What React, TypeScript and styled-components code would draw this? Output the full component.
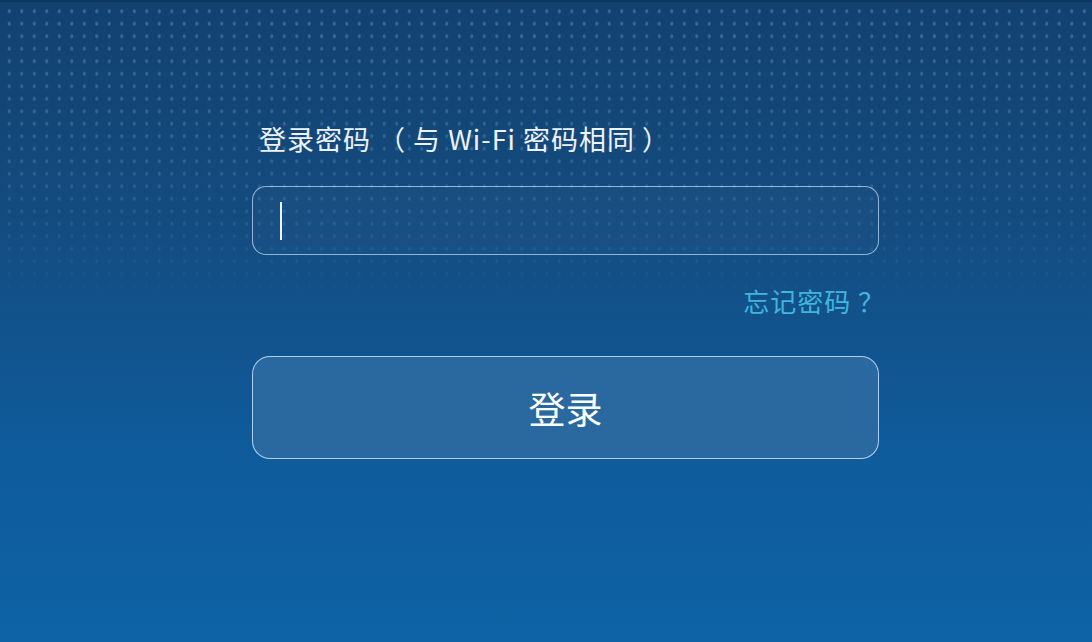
import styled, { createGlobalStyle } from "styled-components";

const GlobalStyle = createGlobalStyle`
  html, body {
    margin: 0;
    padding: 0;
    height: 100%;
  }
  body {
    font-family: "Noto Sans CJK SC", "Noto Sans", sans-serif;
    background: #1e5a92;
  }
`;

const Screen = styled.div`
  position: relative;
  width: 100%;
  height: 642px;
  overflow: hidden;
  background: linear-gradient(180deg, #12416f 0%, #144c80 35%, #0f5b9b 70%, #0d63a6 100%);
  border-top: 2px solid #0e3661;
  box-sizing: border-box;

  &::before {
    content: "";
    position: absolute;
    inset: 0;
    background-image: radial-gradient(ellipse 1.8px 2.4px, rgba(120, 170, 220, 0.38) 70%, transparent 100%);
    background-size: 12.5px 12.5px;
    background-position: 3px 3px;
    -webkit-mask-image: linear-gradient(180deg, #000 0%, rgba(0, 0, 0, 0.7) 25%, transparent 48%);
    mask-image: linear-gradient(180deg, #000 0%, rgba(0, 0, 0, 0.7) 25%, transparent 48%);
    pointer-events: none;
  }
`;

const Form = styled.div`
  position: relative;
  display: flex;
  flex-direction: column;
  width: 627px;
  margin-left: 252px;
  padding-top: 119px;
`;

const Label = styled.div`
  font-size: 27px;
  line-height: 36px;
  letter-spacing: 1px;
  color: #eef3f9;
  padding-left: 7px;
  margin-bottom: 29px;
  white-space: pre;
`;

const Field = styled.div`
  height: 69px;
  box-sizing: border-box;
  border: 1.5px solid rgba(180, 210, 240, 0.78);
  border-radius: 14px;
  background: rgba(255, 255, 255, 0.02);
  display: flex;
  align-items: center;
  padding-left: 27px;
`;

const Caret = styled.span`
  width: 2px;
  height: 38px;
  background: #eef4fa;
`;

const Forgot = styled.a`
  align-self: flex-end;
  margin-top: 30px;
  margin-right: -6px;
  font-size: 26px;
  letter-spacing: 1px;
  line-height: 32px;
  color: #3fb6dc;
  text-decoration: none;
  cursor: pointer;
`;

const LoginButton = styled.button`
  margin-top: 39px;
  height: 103px;
  border: 1.5px solid rgba(190, 220, 248, 0.9);
  border-radius: 18px;
  background: #2a69a0;
  color: #ffffff;
  font-family: "Noto Sans CJK SC", "Noto Sans", sans-serif;
  font-size: 37px;
  cursor: pointer;
  padding: 0;
`;

export default function App() {
  return (
    <>
      <GlobalStyle />
      <Screen>
        <Form>
          <Label>{"登录密码 （ 与 Wi-Fi 密码相同 ）"}</Label>
          <Field>
            <Caret />
          </Field>
          <Forgot>忘记密码 ？</Forgot>
          <LoginButton type="button">登录</LoginButton>
        </Form>
      </Screen>
    </>
  );
}
